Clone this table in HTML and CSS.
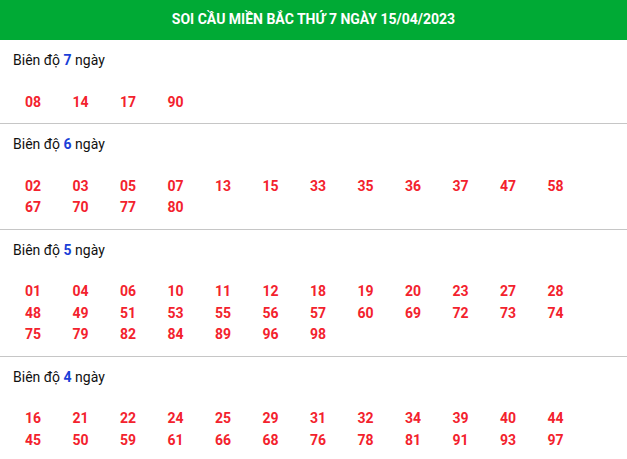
FILE: index.html
```html
<!DOCTYPE html>
<html lang="vi">

<head>
    <meta charset="UTF-8">
    <meta name="viewport" content="width=device-width, initial-scale=1.0">
    <title>Soi cầu miền Bắc</title>
    <link rel="stylesheet" href="styles.css">
</head>

<body>
    <header class="title-bar">
        <h1>SOI CẦU MIỀN BẮC THỨ 7 NGÀY 15/04/2023</h1>
    </header>

    <div class="section">
        <div class="label">Biên độ <b>7</b> ngày</div>
        <div class="numbers">
            <span>08</span><span>14</span><span>17</span><span>90</span>
        </div>
    </div>

    <div class="section">
        <div class="label">Biên độ <b>6</b> ngày</div>
        <div class="numbers">
            <span>02</span><span>03</span><span>05</span><span>07</span><span>13</span><span>15</span>
            <span>33</span><span>35</span><span>36</span><span>37</span><span>47</span><span>58</span>
            <span>67</span><span>70</span><span>77</span><span>80</span>
        </div>
    </div>

    <div class="section">
        <div class="label">Biên độ <b>5</b> ngày</div>
        <div class="numbers">
            <span>01</span><span>04</span><span>06</span><span>10</span><span>11</span><span>12</span>
            <span>18</span><span>19</span><span>20</span><span>23</span><span>27</span><span>28</span>
            <span>48</span><span>49</span><span>51</span><span>53</span><span>55</span><span>56</span>
            <span>57</span><span>60</span><span>69</span><span>72</span><span>73</span><span>74</span>
            <span>75</span><span>79</span><span>82</span><span>84</span><span>89</span><span>96</span>
            <span>98</span>
        </div>
    </div>

    <div class="section">
        <div class="label">Biên độ <b>4</b> ngày</div>
        <div class="numbers">
            <span>16</span><span>21</span><span>22</span><span>24</span><span>25</span><span>29</span>
            <span>31</span><span>32</span><span>34</span><span>39</span><span>40</span><span>44</span>
            <span>45</span><span>50</span><span>59</span><span>61</span><span>66</span><span>68</span>
            <span>76</span><span>78</span><span>81</span><span>91</span><span>93</span><span>97</span>
        </div>
    </div>
</body>

</html>
```

FILE: styles.css
```css
body {
    font-family: Roboto, Arial, sans-serif;
    margin: 0;
    padding: 0;
    background-color: #fff;
    color: #111;
}

.title-bar {
    background-color: #00aa35;
    height: 40px;
    display: flex;
    align-items: center;
    justify-content: center;
}

.title-bar h1 {
    margin: 0;
    color: #fff;
    font-size: 14px;
    font-weight: bold;
    margin-top: -2px;
}

.section {
    padding: 10px 0 10px;
    border-bottom: 1px solid #c6c6c6;
}

.label {
    padding-left: 13px;
    font-size: 14px;
    line-height: 20px;
}

.label b {
    color: #1a3fd8;
}

.numbers {
    margin-top: 21.5px;
    padding-left: 25px;
    display: grid;
    grid-template-columns: repeat(12, 47.5px);
    line-height: 21.5px;
}

.numbers span {
    color: #f3222d;
    font-size: 14px;
    font-weight: bold;
}
```
